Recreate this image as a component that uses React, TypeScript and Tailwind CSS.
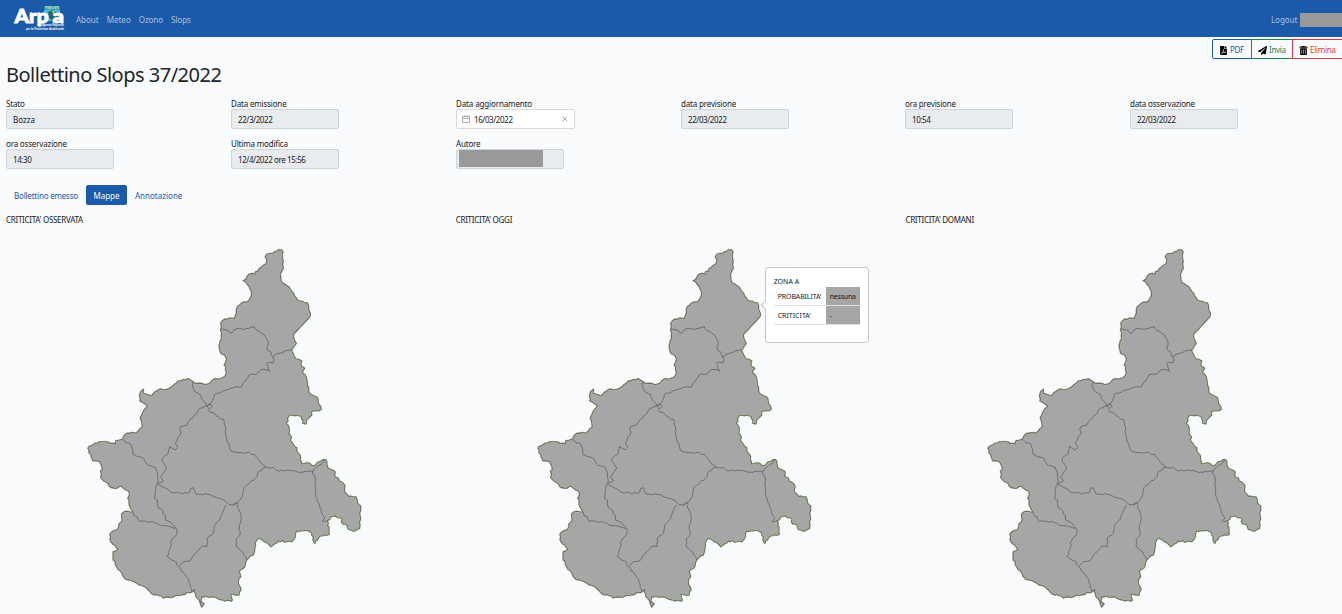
import { FaFilePdf, FaPaperPlane, FaTrashAlt } from "react-icons/fa";

type Pt = [number, number];

const parse = (s: string): Pt[] =>
  s.split(" ").map((p) => p.split(",").map(Number) as unknown as Pt);

// Adds small deterministic irregularities so that the borders read as natural ones.
function roughen(points: Pt[], seed: number): string {
  let state = seed;
  const rand = () => {
    state = (state * 16807) % 2147483647;
    return state / 2147483647 - 0.5;
  };
  const out: string[] = [];
  points.forEach((p, i) => {
    out.push(`${p[0]},${p[1]}`);
    const q = points[i + 1];
    if (!q) return;
    const len = Math.hypot(q[0] - p[0], q[1] - p[1]);
    const n = Math.floor(len / 2.2);
    for (let k = 1; k < n; k++) {
      const t = k / n;
      const x = p[0] + (q[0] - p[0]) * t + rand() * 1.9;
      const y = p[1] + (q[1] - p[1]) * t + rand() * 1.9;
      out.push(`${x.toFixed(1)},${y.toFixed(1)}`);
    }
  });
  return out.join(" ");
}

const NORTH =
  "88,448.3 95,443.3 104,441.7 108,442 115,444.3 116,440.7 122.7,439 124,436 126.7,433.3 132,432.5 136.7,432.7 142.3,427.3 141.5,421 140.3,417.7 143,412 147.7,405.7 143,402.5 140,400.7 139.5,396 140.7,391.7 143.3,389.3 143.3,393.3 147,394.5 152,395.7 155,392 158.3,390 170,388 174,384.5 178.3,381 188.3,378.7 195,383.3 206.7,384.3 215,378.7 223.3,377.7 226.7,372.7 224.3,365 226.7,359 222,354 220,350 220,343 221.3,336 220.5,330 220.7,323.3 225,319 234.3,318.7 236.5,313 237.3,306.7 241,303.5 246.7,302.3 250,298.5 251.7,291.7 249,286 243.3,280.7 249,274.3 255,274.3 259,269 266.7,262.7 265.3,256.7 270,253.5 275,251.7 281.7,250";
const TOP = "281.7,250 283,251.7 283.3,268.3 280,274.3 281.7,282.3 289.3,287";
const EAST =
  "289.3,287 297.3,300.3 302.7,301.3 308.3,305 310,316.7";
const BORDER = "310,316.7 305,322 299.5,328 293.7,334";
const MIDEAST =
  "293.7,334 296.3,343.3 291.3,350 296,359 301.7,361 301,366 304.7,368.3 302.7,373.3 306,376.7 307.3,385 309.3,393.3 316,396.7 321.3,409 311.3,411.7 311.7,415 308.5,418 306,424 302.7,423.3 301,416 294.3,415.7 289.3,415.3 286,423.3 289.3,428.3 288.7,434 291.5,437.5 290,440 295,446.7 300,455 301,464 307.3,462.7 314,466 318.3,461.7 325.7,459.7 328,468.3 334,471 336,477.3 345,486 344.3,491.7 349,496.7 355.7,496.7 357.3,502.7 360.7,506 359.7,528.3 354,531.3 348.3,529.3 347,525 342.7,524 340.7,517.7 332.7,516.3 327.3,520.7 329.3,534 320,536 315,543.3 311.7,532.7 308.3,530.7 296.7,530.7 295.3,536.7 291.7,541.7 278.3,540.7 270.7,546.7 266,542 258.3,538 255,543.3 253.3,555 246.7,560 245,566 239,571.7 240.7,576.7 238.3,581.7 241,590 239,595 231,594 232.3,600 225,601 216,597.5 206.7,596";
const SOUTH =
  "206.7,596 201.7,596.7 201,601.7 204,604 201.7,607 200,602 196,596.7 195,589.3 191.7,592 178,595.5 163.3,598 159,595.5 152.3,594 147,588.5 141.7,585.3 134,581.5 126,579.3 122,573 117,567 113.3,560 113.3,551.7 118.3,549.3 113,544 110,539.3 111,532.7 117,530 119,524 121.7,521.7 121.7,514 126.7,511.3 133.3,512.3 129.3,505 128.3,490.7 120,486 116.7,488.3 109.3,486 100.7,477.3 102,466.7 99.3,461.3 92.7,460.7 88,448.3";

const INNER = [
  "220.7,328.3 227,330 230.5,333.3 237,328.5 244,329.5 249,328.3 254.3,326.7 257,330.5 264,334.5 268,341.5 267.3,350 271,352.3 273,357.5 273,363",
  "273,357.5 277,354 283,352.3 291.3,350",
  "273,363 266.3,363.3 270,371.5 261.5,369.5 257.5,373.7 249,375 243.5,382.5 241.7,386.5 231,388.3 221.7,391.7 214.5,394.3 211.5,402.3 206.5,406",
  "192.7,382.5 194,390.7 200.5,394.5 204,401.5 206.5,406",
  "206.5,406 210,403.5 212,406.5 209.5,409 206.5,406",
  "206.5,406 198.3,409.7 192.5,418.3 186.7,425 180.5,426.7 180.3,435 175,443.5 177.7,447.5 175,450 169.5,446.5 168.3,453 162,460.5 166.7,468 160.7,476.5 163.5,481 156.5,484",
  "122.7,439.7 131,444.5 133,454.5 142,457.3 147,464.5 155.5,467.5 157.5,476 157.3,484",
  "208.5,409.5 215.5,414.5 224.3,421.3 226,434.5 229.3,446.7 233,451.7 243.5,453.3 247,452.5 254.5,454.3 259.5,461.3 266.3,467.3",
  "266.3,467.3 273.3,467.3 276.5,470.3 295,471 303,472.3 313,471.3",
  "313,471.3 320,465 325.7,459.7",
  "266.3,467.3 259.3,471 255.5,478 244,487.5 241.7,497.7 237.7,502 233,504.7",
  "313,471.3 315.3,480 315.3,491.7 319.3,505.3 323.5,516.5 325,518 322,521 327.3,520.7",
  "157.3,483 165,488 172.7,492.7 188.3,493.7 190.5,488.5 193.3,487.7 196,494 207,494.3 218.3,498.3 225,500.7 229,504.5 238.5,504",
  "157.3,484 155,495 158.5,508 163,511 165.5,520 172,523.7 175,526.7 177,533 172,540 167,556.5",
  "167,556.5 174.5,561 178.5,566.7 184.3,573.7 189,579.5 191.7,592",
  "133.5,512.5 139.3,521.5 153.5,522.3 164.3,525.7 175.3,528.5",
  "226.5,505 221,516.5 214.5,526.7 213.3,533.3 207,539 207,546.7 201.5,546.3 193.3,555.5 190,560.7 183.7,561.5 178.5,566.7",
  "237.7,505 241.3,517.5 239.3,524.5 240,535 236.7,538.7 237,547.5 243,552.3 246.7,560",
];

const north = roughen(parse(NORTH), 71);
const top = roughen(parse(TOP), 53);
const east = roughen(parse(EAST), 137);
const midEast = roughen(parse(MIDEAST), 139);
const south = roughen(parse(SOUTH), 911);
const inner = INNER.map((line, i) => roughen(parse(line), 301 + i * 97));
const outline = `${north} ${top} ${east} ${BORDER} ${midEast} ${south}`;

function RegionMap({ className }: { className: string }) {
  return (
    <svg viewBox="6 229 450 385" width="450" height="385" className={`block ${className}`} fill="none" strokeLinejoin="round">
      <polygon points={outline} fill="#a6a6a6" />
      <polyline points={`${east} ${BORDER} ${midEast}`} stroke="#b4d896" strokeWidth="1.6" />
      <polyline points={`${south} ${north} ${top}`} stroke="#c4c0a8" strokeWidth="1.8" />
      <polygon points={outline} stroke="#706e68" strokeWidth="1.1" />
      {inner.map((p) => (
        <polyline key={p} points={p} stroke="#6e6e6e" strokeWidth="1" />
      ))}
    </svg>
  );
}

function Logo() {
  return (
    <svg width="52" height="27" viewBox="0 0 52 27" className="block overflow-visible">
      <rect x="30" y="0" width="16" height="15" fill="#49b9e8" />
      <rect x="30" y="0" width="16" height="3.4" fill="#128a72" />
      <text x="31" y="2.8" fontSize="2.6" fontWeight="700" fill="#d9f0e8" textLength="14" lengthAdjust="spacingAndGlyphs" fontFamily="Liberation Sans, sans-serif">PIEMONTE</text>
      <path d="M34 6l4-2 5 3 2 5-6 4-4-4z" fill="#236b70" />
      <path d="M37 4l4 2-1 3z" fill="#9bd34f" />
      <g fill="#fff" stroke="#fff" strokeWidth="0.9" fontFamily="Lato, sans-serif" fontWeight="900" fontSize="19">
        <text x="0.5" y="17" textLength="34" lengthAdjust="spacingAndGlyphs">Arp</text>
        <text x="38.5" y="17" textLength="11.5" lengthAdjust="spacingAndGlyphs">a</text>
      </g>
      <g fill="#fff" fontFamily="Liberation Sans, sans-serif" fontWeight="700" fontSize="2.6">
        <text x="28" y="20.3" textLength="22" lengthAdjust="spacingAndGlyphs">Agenzia Regionale</text>
        <text x="12" y="23.6" textLength="38" lengthAdjust="spacingAndGlyphs">per la Protezione Ambientale</text>
      </g>
    </svg>
  );
}

function Field({ label, value, tight }: { label: string; value?: string; tight?: string }) {
  return (
    <div className="h-10">
      <div className="h-[11px] leading-[11px] tracking-[-0.17px]">{label}</div>
      <div className="flex h-5 w-[108px] items-center rounded-[2px] border border-[#ced4da] bg-[#e9ecef] px-1.5">
        {value ? (
          <span className={`pt-[2px] ${tight ?? "tracking-[-0.4px]"}`}>{value}</span>
        ) : (
          <span className="-ml-1 mb-px h-[17px] w-[84px] bg-[#999]" />
        )}
      </div>
    </div>
  );
}

function DateField() {
  return (
    <div className="h-10">
      <div className="h-[11px] leading-[11px] tracking-[-0.13px]">Data aggiornamento</div>
      <div className="flex h-5 w-[119px] items-center rounded-[2px] border border-[#d9d9d9] bg-white pl-[5px] pr-1.5">
        <svg width="8" height="8" viewBox="0 0 8 8" fill="none" stroke="#adadad" strokeWidth="1" shapeRendering="crispEdges" className="mb-px">
          <path d="M.5 1.5h7v6h-7zM.5 3.5h7M2.5 0v2M5.5 0v2" />
        </svg>
        <span className="ml-1 pt-[2px] tracking-[-0.4px]">16/03/2022</span>
        <svg width="6" height="6" viewBox="0 0 6 6" stroke="#999" strokeWidth="0.8" className="mb-px ml-auto">
          <path d="M.8.8l4.4 4.4M5.2.8L.8 5.2" />
        </svg>
      </div>
    </div>
  );
}

function ZonePopup() {
  return (
    <div className="absolute left-[309px] top-[53px] h-[76px] w-[104px] rounded-[3px] border border-[#c4c6c9] bg-white px-2 pt-[9px] text-[7px]">
      <span className="absolute -left-[3.5px] top-[34px] size-[6px] rotate-45 border-b border-l border-[#c4c6c9] bg-white" />
      <div className="h-[10px] leading-[10px]">ZONA A</div>
      <div className="flex h-[19px] items-center border-b border-[#dee2e6]">
        <span className="w-[52px] pl-1 pt-px tracking-[-0.12px]">PROBABILITA'</span>
        <span className="flex h-full flex-1 items-center bg-[#a6a6a6] pl-1 pt-px tracking-[-0.2px]">nessuna</span>
      </div>
      <div className="flex h-[19px] items-center border-b border-[#dee2e6]">
        <span className="w-[52px] pl-1 pt-px">CRITICITA'</span>
        <span className="flex h-full flex-1 items-center bg-[#a6a6a6] pl-1 pt-px">-</span>
      </div>
    </div>
  );
}

function MapPanel({ title, popup, mapClass = "" }: { title: string; popup?: boolean; mapClass?: string }) {
  return (
    <div className="relative w-[449.7px] shrink-0">
      <div className="h-[15px] leading-[12px] tracking-[-0.28px]">{title}</div>
      <RegionMap className={mapClass} />
      {popup && <ZonePopup />}
    </div>
  );
}

export default function App() {
  return (
    <div className="h-[614px] overflow-hidden bg-[#f8fafc] font-['Noto_Sans',sans-serif] text-[8px] leading-[12px] text-[#16191c]">
      <header className="flex h-[37px] items-center bg-[#1a5aa8] text-[#a9c1df]">
        <div className="ml-3.5 mr-2.5 pt-0.5">
          <Logo />
        </div>
        <nav className="flex flex-1 gap-2 pt-0.5">
          <a>About</a>
          <a>Meteo</a>
          <a className="tracking-[-0.1px]">Ozono</a>
          <a>Slops</a>
        </nav>
        <a className="mr-[2.5px] pt-0.5">Logout</a>
        <span className="mt-[3px] h-3.5 w-[42px] bg-[#999]" />
      </header>

      <div className="mt-0.5 flex h-5 justify-end">
        <button className="flex w-10 items-center gap-[2px] rounded-l-[2px] border border-[#1a5aa8] pl-[6px] pt-[2px] text-[#1a5aa8]">
          <FaFilePdf className="size-[9px] text-black" />
          <span className="tracking-[-0.4px]">PDF</span>
        </button>
        <button className="-ml-px flex w-[42px] items-center gap-[2px] border border-[#198754] pl-1.5 pt-[2px] text-[#198754]">
          <FaPaperPlane className="size-[9px] text-black" />
          <span className="tracking-[-0.3px]">Invia</span>
        </button>
        <button className="-ml-px flex w-[50px] items-center gap-[2px] border border-r-0 border-[#dc3545] pl-1.5 pt-[2px] text-[#dc3545]">
          <FaTrashAlt className="size-[9px] text-black" />
          <span className="tracking-[-0.25px]">Elimina</span>
        </button>
      </div>

      <main className="w-[1360px] pl-1.5">
        <h1 className="mt-1 h-[35px] text-[20px] leading-[24px] tracking-[-0.5px] text-[#212529]">Bollettino Slops 37/2022</h1>
        <div className="grid grid-cols-[225px_225px_225px_224px_225px_225px]">
          <Field label="Stato" value="Bozza" tight="tracking-normal" />
          <Field label="Data emissione" value="22/3/2022" />
          <DateField />
          <Field label="data previsione" value="22/03/2022" />
          <Field label="ora previsione" value="10:54" />
          <Field label="data osservazione" value="22/03/2022" />
          <Field label="ora osservazione" value="14:30" />
          <Field label="Ultima modifica" value="12/4/2022 ore 15:56" />
          <Field label="Autore" />
        </div>
        <div className="mt-[7px] flex h-5 text-[#1a5aa8]">
          <a className="flex w-20 items-center pl-2 pt-[2px] tracking-[-0.2px]">Bollettino emesso</a>
          <a className="flex w-[41px] items-center justify-center rounded-[2px] bg-[#1a5aa8] pt-[2px] text-white">Mappe</a>
          <a className="flex items-center pl-2 pt-[2px]">Annotazione</a>
        </div>
        <div className="mt-[9px] flex">
          <MapPanel title="CRITICITA' OSSERVATA" />
          <MapPanel title="CRITICITA' OGGI" popup />
          <MapPanel title="CRITICITA' DOMANI" mapClass="ml-px" />
        </div>
      </main>
    </div>
  );
}
